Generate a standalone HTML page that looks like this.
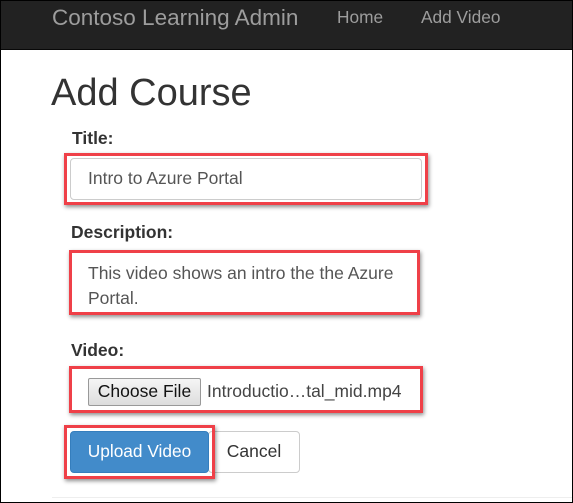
<!DOCTYPE html>
<html><head><style>
html,body{margin:0;padding:0}
body{width:571px;height:501px;border:1px solid #000;position:relative;overflow:hidden;background:#fff;font-family:"Liberation Sans",Arial,sans-serif;color:#333}
.nav{position:absolute;left:0;top:0;width:571px;height:48px;background:#222;border-bottom:1px solid #080808}
.nav span{position:absolute;color:#9d9d9d;white-space:nowrap}
.abs{position:absolute;white-space:nowrap}
.red{position:absolute;border:3px solid #ef4048;box-shadow:1px 2px 4px rgba(0,0,0,.45);box-sizing:border-box}
.lbl{position:absolute;font-weight:bold;font-size:17.5px;color:#333}
</style></head><body>
<div class="nav">
<span style="left:51px;top:4px;font-size:22.5px">Contoso Learning Admin</span>
<span style="left:336px;top:6px;font-size:17.3px">Home</span>
<span style="left:420px;top:6px;font-size:17.3px">Add Video</span>
</div>
<div class="abs" style="left:50px;top:71px;font-size:38px;color:#333">Add Course</div>
<div class="lbl" style="left:71px;top:127px">Title:</div>
<div class="red" style="left:63px;top:152px;width:364px;height:52px">
 <div style="position:absolute;left:3px;top:2px;right:3px;bottom:2px;border:1px solid #ccc;border-radius:4px;background:#fff"></div>
 <div class="abs" style="left:21px;top:12px;font-size:17.5px;color:#555">Intro to Azure Portal</div>
</div>
<div class="lbl" style="left:70px;top:221px">Description:</div>
<div class="red" style="left:68px;top:249px;width:351px;height:65px;background:#fff">
 <div class="abs" style="left:16px;top:8px;font-size:17.5px;color:#555;line-height:25px">This video shows an intro the the Azure<br>Portal.</div>
</div>
<div class="lbl" style="left:70px;top:339px">Video:</div>
<div class="red" style="left:68px;top:365px;width:354px;height:47px;background:#fff">
 <div style="position:absolute;left:16px;top:9px;width:113px;height:28px;border:1px solid #999;border-radius:2px;background:linear-gradient(#f5f5f5,#ddd);box-sizing:border-box;font-size:17.5px;color:#111;text-align:center;line-height:25px">Choose File</div>
 <div class="abs" style="left:135px;top:12px;font-size:17.5px;color:#444">Introductio…tal_mid.mp4</div>
</div>
<div style="position:absolute;left:207px;top:430px;width:92px;height:42px;border:1px solid #ccc;border-radius:4px;box-sizing:border-box;font-size:17.5px;color:#333;line-height:38px;text-align:center">Cancel</div>
<div class="red" style="left:63px;top:424px;width:151px;height:54px">
 <div style="position:absolute;left:3px;top:3px;width:139px;height:42px;background:#428bca;border:1px solid #357ebd;border-radius:4px;box-sizing:border-box;color:#fff;font-size:17.3px;text-align:center;line-height:38px">Upload Video</div>
</div>
<div style="position:absolute;left:51px;top:496px;width:520px;height:1px;background:#eee"></div>
</body></html>
